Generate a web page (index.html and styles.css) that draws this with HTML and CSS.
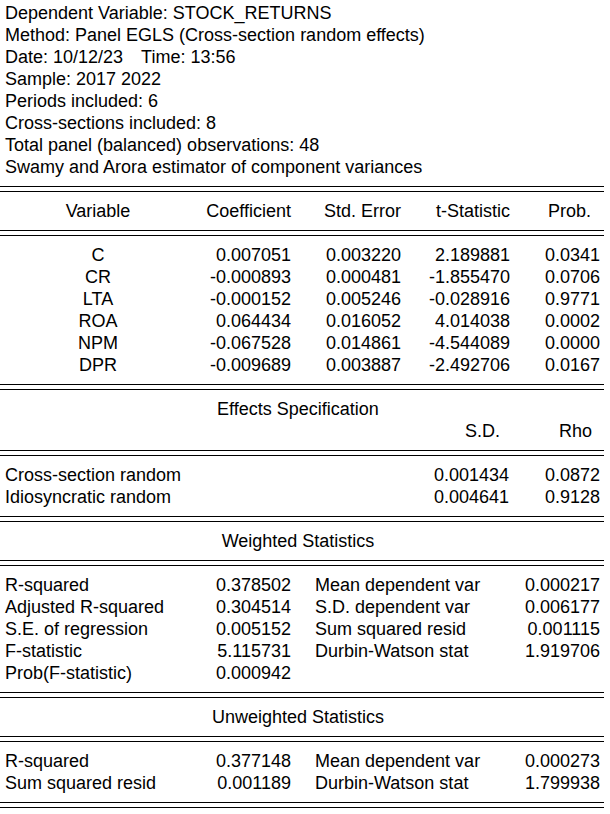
FILE: index.html
```html
<!DOCTYPE html>
<html>
<head>
<meta charset="utf-8">
<link rel="stylesheet" href="styles.css">
</head>
<body>
<div class="out">
  <div class="info">
    <div>Dependent Variable: STOCK_RETURNS</div>
    <div>Method: Panel EGLS (Cross-section random effects)</div>
    <div>Date: 10/12/23<span class="gap">Time: 13:56</span></div>
    <div>Sample: 2017 2022</div>
    <div>Periods included: 6</div>
    <div>Cross-sections included: 8</div>
    <div>Total panel (balanced) observations: 48</div>
    <div>Swamy and Arora estimator of component variances</div>
  </div>

  <div class="rule"></div>
  <div class="sec">
    <div class="coef head">
      <span class="c-var">Variable</span>
      <span class="num">Coefficient</span>
      <span class="num">Std. Error</span>
      <span class="num">t-Statistic</span>
      <span class="num h-prob">Prob.</span>
    </div>
  </div>
  <div class="rule"></div>
  <div class="sec">
    <div class="coef"><span class="c-var">C</span><span class="num">0.007051</span><span class="num">0.003220</span><span class="num">2.189881</span><span class="num">0.0341</span></div>
    <div class="coef"><span class="c-var">CR</span><span class="num">-0.000893</span><span class="num">0.000481</span><span class="num">-1.855470</span><span class="num">0.0706</span></div>
    <div class="coef"><span class="c-var">LTA</span><span class="num">-0.000152</span><span class="num">0.005246</span><span class="num">-0.028916</span><span class="num">0.9771</span></div>
    <div class="coef"><span class="c-var">ROA</span><span class="num">0.064434</span><span class="num">0.016052</span><span class="num">4.014038</span><span class="num">0.0002</span></div>
    <div class="coef"><span class="c-var">NPM</span><span class="num">-0.067528</span><span class="num">0.014861</span><span class="num">-4.544089</span><span class="num">0.0000</span></div>
    <div class="coef"><span class="c-var">DPR</span><span class="num">-0.009689</span><span class="num">0.003887</span><span class="num">-2.492706</span><span class="num">0.0167</span></div>
  </div>
  <div class="rule"></div>
  <div class="sec">
    <div class="title">Effects Specification</div>
    <div class="eff"><span></span><span class="num h-sd">S.D.</span><span class="num h-rho">Rho</span></div>
  </div>
  <div class="rule"></div>
  <div class="sec">
    <div class="eff"><span class="lab">Cross-section random</span><span class="num">0.001434</span><span class="num">0.0872</span></div>
    <div class="eff"><span class="lab">Idiosyncratic random</span><span class="num">0.004641</span><span class="num">0.9128</span></div>
  </div>
  <div class="rule"></div>
  <div class="sec">
    <div class="title">Weighted Statistics</div>
  </div>
  <div class="rule"></div>
  <div class="sec">
    <div class="stat"><span class="lab">R-squared</span><span class="num">0.378502</span><span class="lab2">Mean dependent var</span><span class="num">0.000217</span></div>
    <div class="stat"><span class="lab">Adjusted R-squared</span><span class="num">0.304514</span><span class="lab2">S.D. dependent var</span><span class="num">0.006177</span></div>
    <div class="stat"><span class="lab">S.E. of regression</span><span class="num">0.005152</span><span class="lab2">Sum squared resid</span><span class="num">0.001115</span></div>
    <div class="stat"><span class="lab">F-statistic</span><span class="num">5.115731</span><span class="lab2">Durbin-Watson stat</span><span class="num">1.919706</span></div>
    <div class="stat"><span class="lab">Prob(F-statistic)</span><span class="num">0.000942</span><span class="lab2"></span><span class="num"></span></div>
  </div>
  <div class="rule"></div>
  <div class="sec">
    <div class="title">Unweighted Statistics</div>
  </div>
  <div class="rule"></div>
  <div class="sec">
    <div class="stat"><span class="lab">R-squared</span><span class="num">0.377148</span><span class="lab2">Mean dependent var</span><span class="num">0.000273</span></div>
    <div class="stat"><span class="lab">Sum squared resid</span><span class="num">0.001189</span><span class="lab2">Durbin-Watson stat</span><span class="num">1.799938</span></div>
  </div>
  <div class="rule"></div>
</div>
</body>
</html>
```
FILE: styles.css
```css
html, body {
  margin: 0;
  padding: 0;
  background: #ffffff;
}
.out {
  width: 604px;
  font-family: "Liberation Sans", Arial, sans-serif;
  font-size: 18px;
  line-height: 22px;
  color: #000000;
  padding-top: 2px;
}
.info {
  padding-left: 5px;
  padding-bottom: 8px;
  white-space: nowrap;
}
.gap {
  margin-left: 18px;
}
.rule {
  height: 4px;
  border-top: 1px solid #000;
  border-bottom: 1px solid #000;
}
.sec {
  padding: 8px 0;
}
.coef {
  display: grid;
  grid-template-columns: 196px 95px 110px 109px 90px;
  white-space: nowrap;
}
.coef.head {
  height: 22px;
  padding: 0;
}
.c-var {
  text-align: center;
}
.num {
  text-align: right;
}
.h-prob {
  padding-right: 9px;
}
.title {
  text-align: center;
  width: 596px;
}
.eff {
  display: grid;
  grid-template-columns: 400px 109px 91px;
  white-space: nowrap;
}
.lab {
  padding-left: 5px;
}
.h-sd {
  padding-right: 9px;
}
.h-rho {
  padding-right: 8px;
}
.stat {
  display: grid;
  grid-template-columns: 200px 91px 204px 105px;
  white-space: nowrap;
}
.lab2 {
  padding-left: 24px;
}
```
